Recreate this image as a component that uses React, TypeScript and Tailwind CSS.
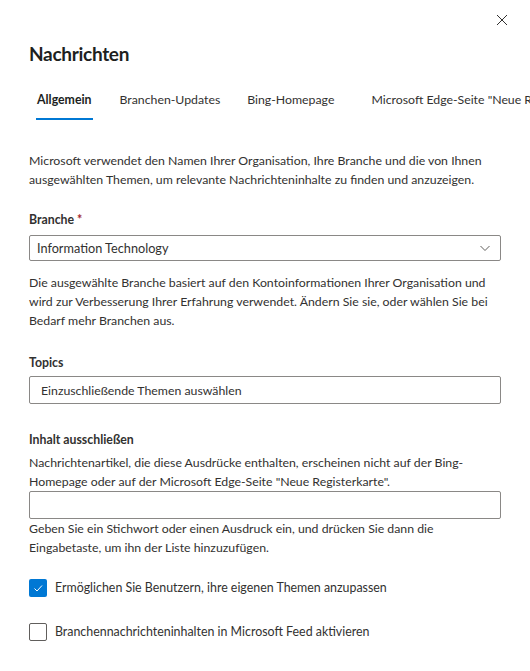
import React from "react";

export default function App() {
  return (
    <div
      className="w-[530px] h-[671px] bg-white overflow-hidden text-[#323130] relative"
      style={{ fontFamily: '"Segoe UI", Lato, "Noto Sans", sans-serif' }}
    >
      <div className="flex justify-end pt-[14px] pr-[22px] h-[36px]">
        <svg width="12" height="12" viewBox="0 0 12 12" fill="none" stroke="#323130" strokeWidth="1">
          <path d="M1 1L11 11M11 1L1 11" />
        </svg>
      </div>
      <div className="pl-[29px]">
        <h1 className="text-[19px] font-bold leading-[28px] tracking-[-0.3px] text-[#201f1e] mt-[4px]">Nachrichten</h1>
        <div className="flex mt-[18px] text-[12.3px] whitespace-nowrap">
          <div className="px-[8px] flex flex-col">
            <span className="leading-[28px] text-[#201f1e] font-bold">Allgemein</span>
            <div className="h-[2px] bg-[#0078d4] mt-[4px] -mx-[1px]" />
          </div>
          <div className="px-[8px] ml-[12px]"><span className="leading-[28px]">Branchen-Updates</span></div>
          <div className="px-[8px] ml-[11px]"><span className="leading-[28px]">Bing-Homepage</span></div>
          <div className="px-[8px] ml-[21px]"><span className="leading-[28px]">Microsoft Edge-Seite "Neue Registerkarte"</span></div>
        </div>
        <div className="pr-[29px] text-[12.3px] leading-[19px]">
          <p className="mt-[31px]">
            Microsoft verwendet den Namen Ihrer Organisation, Ihre Branche und die von Ihnen ausgewählten Themen, um relevante Nachrichteninhalte zu finden und anzuzeigen.
          </p>
          <div className="mt-[21px] text-[12.3px] font-bold leading-[20px]">
            Branche <span className="text-[#a4262c]">*</span>
          </div>
          <div className="mt-[5px] h-[26px] border border-[#8a8886] rounded-[2px] flex items-center justify-between pl-[7px] pr-[9px]">
            <span className="text-[12.7px]">Information Technology</span>
            <svg width="12" height="12" viewBox="0 0 12 12" fill="none" stroke="#605e5c" strokeWidth="1">
              <path d="M1.5 4L6 8.5L10.5 4" />
            </svg>
          </div>
          <p className="mt-[12px]">
            Die ausgewählte Branche basiert auf den Kontoinformationen Ihrer Organisation und wird zur Verbesserung Ihrer Erfahrung verwendet. Ändern Sie sie, oder wählen Sie bei Bedarf mehr Branchen aus.
          </p>
          <div className="mt-[23px] text-[12.3px] font-bold leading-[20px]">Topics</div>
          <div className="mt-[3px] h-[28px] border border-[#8a8886] rounded-[2px] flex items-center pl-[11px]">
            <span>Einzuschließende Themen auswählen</span>
          </div>
          <div className="mt-[26px] text-[12.3px] font-bold leading-[20px]">Inhalt ausschließen</div>
          <p className="mt-[3px]">
            Nachrichtenartikel, die diese Ausdrücke enthalten, erscheinen nicht auf der Bing-Homepage oder auf der Microsoft Edge-Seite "Neue Registerkarte".
          </p>
          <div className="h-[28px] border border-[#8a8886] rounded-[2px]" />
          <p>
            Geben Sie ein Stichwort oder einen Ausdruck ein, und drücken Sie dann die Eingabetaste, um ihn der Liste hinzuzufügen.
          </p>
          <label className="flex items-center mt-[21px] text-[12.4px]">
            <span className="w-[18px] h-[18px] shrink-0 rounded-[2px] bg-[#0078d4] flex items-center justify-center">
              <svg width="12" height="12" viewBox="0 0 12 12" fill="none" stroke="white" strokeWidth="1">
                <path d="M2.5 6.5L5 9L10 3.5" />
              </svg>
            </span>
            <span className="ml-[8px]">Ermöglichen Sie Benutzern, ihre eigenen Themen anzupassen</span>
          </label>
          <label className="flex items-center mt-[25px] text-[12.4px]">
            <span className="w-[18px] h-[18px] shrink-0 rounded-[2px] border border-[#605e5c] bg-white" />
            <span className="ml-[8px]">Branchennachrichteninhalten in Microsoft Feed aktivieren</span>
          </label>
        </div>
      </div>
    </div>
  );
}
